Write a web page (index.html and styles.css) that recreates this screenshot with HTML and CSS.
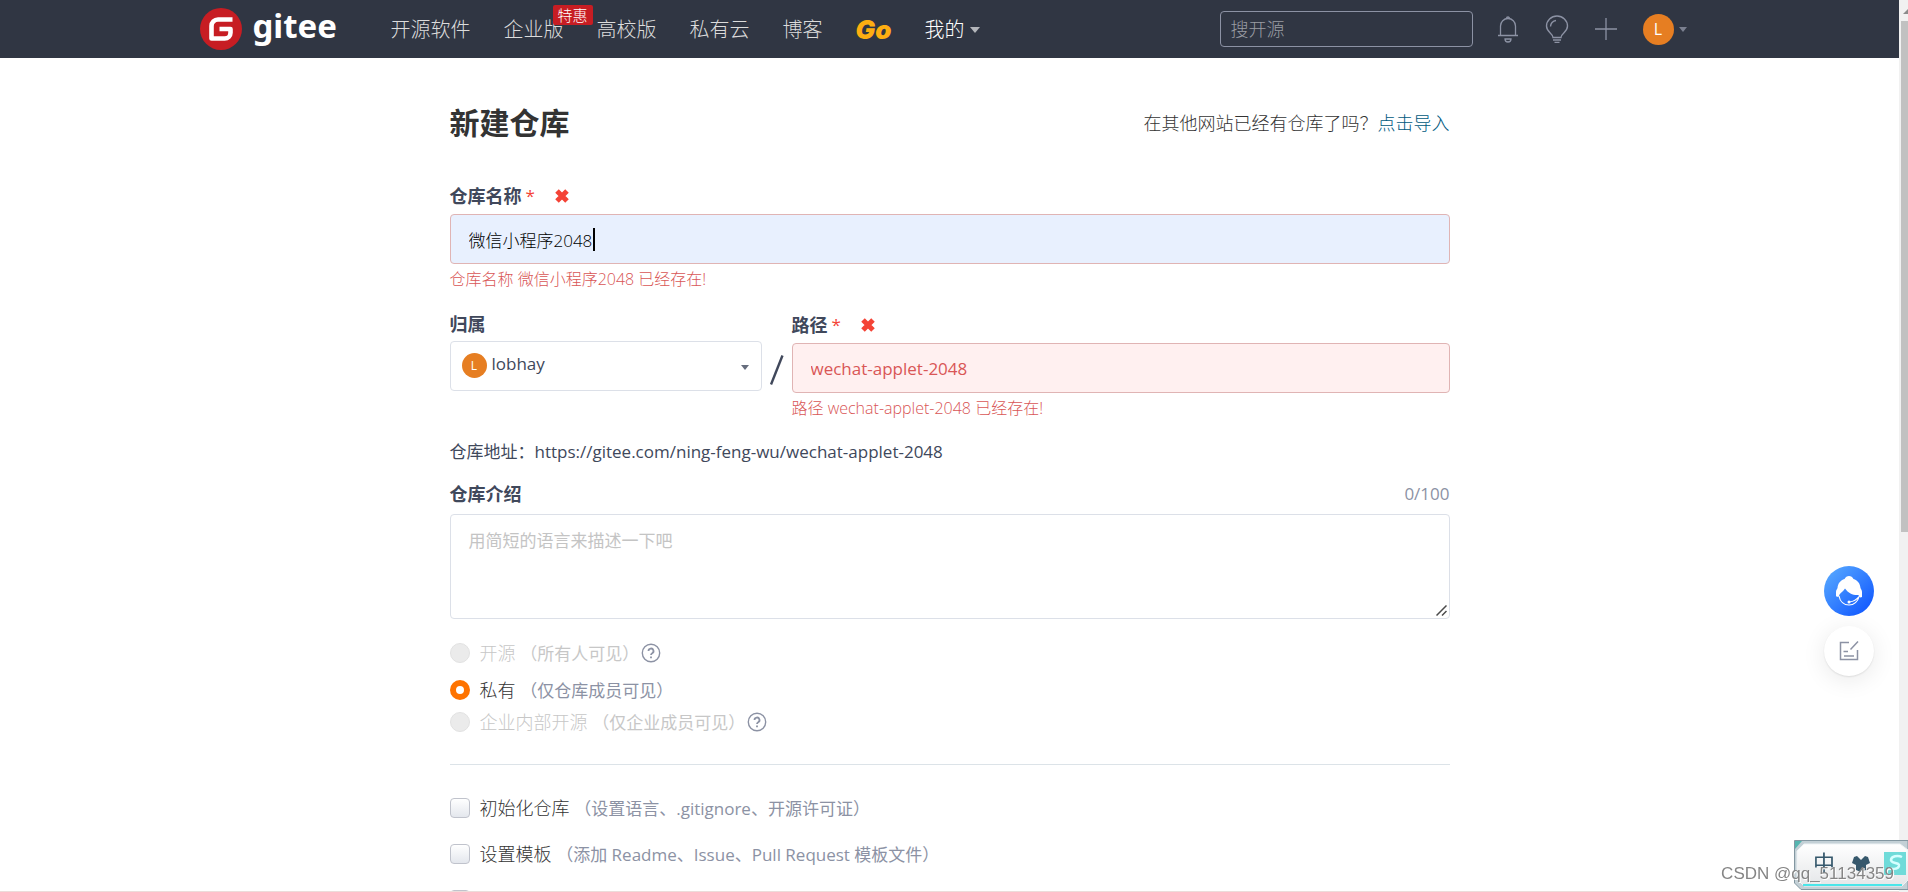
FILE: index.html
```html
<!DOCTYPE html>
<html lang="zh-CN">
<head>
<meta charset="utf-8">
<title>新建仓库 - Gitee</title>
<link rel="stylesheet" href="styles.css">
</head>
<body>
<div class="page">
  <header class="topbar">
    <div class="topbar-inner">
      <a class="logo" href="#">
        <svg class="logo-mark" viewBox="0 0 42 42" aria-hidden="true"><circle cx="21" cy="21" r="21" fill="#c71d23"/><path d="M32.500 11.500H18a6.500 6.500 0 0 0-6.500 6.500v12.500h13.200a5.800 5.800 0 0 0 5.800-5.800V21H19.500" fill="none" stroke="#fff" stroke-width="4.600" stroke-linejoin="round"/></svg>
        <span class="logo-text">gitee</span>
      </a>
      <nav class="nav">
        <a href="#">开源软件</a>
        <a class="has-badge" href="#">企业版<span class="badge">特惠</span></a>
        <a href="#">高校版</a>
        <a href="#">私有云</a>
        <a href="#">博客</a>
        <a class="go" href="#">Go</a>
        <a class="mine" href="#">我的<span class="caret"></span></a>
      </nav>
      <div class="tools">
        <input class="search" type="text" placeholder="搜开源" aria-label="搜开源">
        <button class="tool" type="button" aria-label="通知"><svg width="22" height="28" viewBox="0 0 22 28"><g fill="none" stroke="#8c92a4" stroke-width="1.300"><path d="M1 20.500h20M3.500 20.500V11a7.500 7.500 0 0 1 15 0v9.500"/><path d="M9.500 3.500a1.500 1.500 0 0 1 3 0M8 24h6a3 3 0 0 1-6 0z"/></g></svg></button>
        <button class="tool" type="button" aria-label="提示"><svg width="24" height="28" viewBox="0 0 24 28"><g fill="none" stroke="#8c92a4" stroke-width="1.400"><path d="M8 22.500c0-4.500-6.500-5-6.500-11.500a10.500 10 0 0 1 21 0c0 6.500-6.500 7-6.500 11.500zM8 25h8M9.500 27.500h5M5.500 11.500a6 6 0 0 1 5.500-6"/></g></svg></button>
        <button class="tool" type="button" aria-label="新建"><svg width="22" height="22" viewBox="0 0 22 22"><path d="M0 11h22M11 0v22" stroke="#8c92a4" stroke-width="1.300"/></svg></button>
        <button class="user" type="button" aria-label="账户"><span class="avatar avatar-lg">L</span><span class="caret caret-sm"></span></button>
      </div>
    </div>
  </header>

  <main class="content">
    <div class="heading">
      <h1>新建仓库</h1>
      <p>在其他网站已经有仓库了吗？<a href="#">点击导入</a></p>
    </div>
    <form class="form">
      <div class="field">
        <div class="label-row"><label for="name">仓库名称</label><span class="star">*</span><svg class="cross" viewBox="0 0 14 14"><path d="M2 2l10 10M12 2L2 12" stroke="#f44336" stroke-width="5"/></svg></div>
        <div class="name-wrap">
          <input class="box box-filled" id="name" type="text" value="微信小程序2048">
          <span class="text-cursor"></span>
        </div>
        <p class="error">仓库名称 微信小程序2048 已经存在!</p>
      </div>
      <div class="path-row">
        <div class="owner">
          <div class="label-row"><label for="owner">归属</label></div>
          <div class="select-wrap">
            <span class="avatar avatar-sm">L</span>
            <select class="box" id="owner"><option>lobhay</option></select>
            <span class="caret caret-dark"></span>
          </div>
        </div>
        <svg class="slash" viewBox="0 0 14 30" aria-hidden="true"><path d="M1 29.500L12.500 0.500" stroke="#40485b" stroke-width="2.400"/></svg>
        <div class="field path">
          <div class="label-row"><label for="path">路径</label><span class="star">*</span><svg class="cross" viewBox="0 0 14 14"><path d="M2 2l10 10M12 2L2 12" stroke="#f44336" stroke-width="5"/></svg></div>
          <input class="box box-error" id="path" type="text" value="wechat-applet-2048">
          <p class="error">路径 wechat-applet-2048 已经存在!</p>
        </div>
      </div>
      <p class="address">仓库地址：https://gitee.com/ning-feng-wu/wechat-applet-2048</p>
      <div class="desc-head"><label for="desc">仓库介绍</label><span class="count">0/100</span></div>
      <div class="area-wrap">
        <textarea class="box area" id="desc" placeholder="用简短的语言来描述一下吧"></textarea>
        <svg class="grip" viewBox="0 0 11 11" aria-hidden="true"><path d="M.5 10.500l10-10M6 10.500l4.500-4.500" stroke="#4a4a4a" stroke-width="1.500"/></svg>
      </div>
      <div class="radios">
        <div class="option off"><input type="radio" name="v" id="r1" disabled><label for="r1">开源 <span>（所有人可见）</span></label><svg class="help" viewBox="0 0 20 20"><g fill="none" stroke="#8c92a4"><circle cx="10" cy="10" r="8.700" stroke-width="1.400"/><path d="M7.500 8a2.500 2.500 0 1 1 3.700 2.200c-.9.500-1.200.9-1.200 1.900M10 13.400v1.800" stroke-width="1.800"/></g></svg></div>
        <div class="option"><input type="radio" name="v" id="r2" checked><label for="r2">私有 <span>（仅仓库成员可见）</span></label></div>
        <div class="option off"><input type="radio" name="v" id="r3" disabled><label for="r3">企业内部开源 <span>（仅企业成员可见）</span></label><svg class="help" viewBox="0 0 20 20"><g fill="none" stroke="#8c92a4"><circle cx="10" cy="10" r="8.700" stroke-width="1.400"/><path d="M7.500 8a2.500 2.500 0 1 1 3.700 2.200c-.9.500-1.200.9-1.200 1.900M10 13.400v1.800" stroke-width="1.800"/></g></svg></div>
      </div>
      <div class="checks">
        <div class="option"><input type="checkbox" id="c1"><label for="c1">初始化仓库 <span>（设置语言、.gitignore、开源许可证）</span></label></div>
        <div class="option"><input type="checkbox" id="c2"><label for="c2">设置模板 <span>（添加 Readme、Issue、Pull Request 模板文件）</span></label></div>
        <div class="option"><input type="checkbox" aria-label="分支模型"></div>
      </div>
    </form>
  </main>
</div>

<div class="scrollbar"><svg class="scroll-up" viewBox="0 0 9 21"><path d="M4 14l5-5v5z" fill="#8b8b8b"/></svg><div class="thumb"></div></div>

<div class="floats">
  <button class="float service" type="button" aria-label="客服"><svg width="50" height="50" viewBox="0 0 50 50"><path fill="#fff" d="M12 30V26c0-2 1-2.500 1.500-4 .5-5 3-7.500 7-9 1-2 2.500-3 4.500-3s3.500 1 4.500 3c4 1.500 6.500 4 7 9 .5 1.500 1.500 2 1.500 4v5c-1.500 1-3 .5-3.500-2-5 .5-10-1.500-13.500-6.500-1.500 3-4 3.500-5.500 6-.5 2.500-2 3-3.500 1.500z"/><path d="M15 30c1 5.500 5 9 10 9s9-3.500 10-8.500c-2.500 3.500-5.500 5-9.500 5.500" fill="none" stroke="#fff" stroke-width="1.200"/><circle cx="25" cy="36" r="1.500" fill="#fff"/></svg></button>
  <button class="float note" type="button" aria-label="反馈"><svg width="20" height="20" viewBox="0 0 20 20"><path d="M10 1.500H1.500v17h17V9M19 .5l-7.500 8M4.500 10.500H9M5 15h10" fill="none" stroke="#8c92a4" stroke-width="1.500"/></svg></button>
</div>

<div class="ime">
  <svg viewBox="0 0 114 50" width="114" height="50">
    <defs><linearGradient id="g" x2="0" y2="1"><stop offset="0" stop-color="#fff"/><stop offset="1" stop-color="#e4e6e8"/></linearGradient></defs>
    <path d="M.5.5H114v49H7L.5 43z" fill="#c3d0d6" stroke="#8397a1"/>
    <path d="M1 1h7L1 9z" fill="#55b5b0"/>
    <path d="M10 4h96l8 6v30l-6 6H10l-7-7V11z" fill="url(#g)" stroke="#eef3f5"/>
    <path d="M9 45h99" stroke="#16e5e8" stroke-width="1.500"/>
    <path d="M60 17l3-1 4 4 4-4 3 1 2 6-4 2v5l-5 2-5-2v-5l-4-2z" fill="#36586c"/>
    <rect x="90" y="12" width="22" height="23" fill="#6fdbd9"/><path d="M108 17c-4-2-11-1-11 3s9 2 8 6-8 3-11 2" fill="none" stroke="#d5ffff" stroke-width="2.500"/>
  </svg>
  <span class="ime-mode">中</span>
</div>
<div class="watermark">CSDN @qq_51134359</div>
</body>
</html>
```
FILE: styles.css
```css
* { box-sizing: border-box; }

body {
  margin: 0;
  height: 100vh;
  display: flex;
  overflow: hidden;
  background: #fff;
  color: #40485b;
  font-family: "Open Sans", "Noto Sans CJK SC", sans-serif;
  font-size: 17px;
  font-weight: 400;
  line-height: 26px;
}

h1, p { margin: 0; }
a { text-decoration: none; }
input, select, textarea, button { font: inherit; color: inherit; }
button { border: 0; padding: 0; background: none; display: flex; align-items: center; }
svg { display: block; flex: none; }

.page { flex: 1; min-width: 0; overflow: hidden; border-bottom: 1px solid #ecdcda; }

.topbar { background: #303643; }
.topbar-inner {
  max-width: 1500px;
  height: 58px;
  margin: 0 auto;
  display: flex;
  align-items: center;
}
.logo { display: flex; align-items: center; gap: 11px; width: 191px; color: #fff; }
.logo-mark { width: 42px; height: 42px; }
.logo-text { font-family: "Noto Sans", sans-serif; font-weight: 700; font-size: 33px; line-height: 40px; padding-bottom: 6px; }
.nav { display: flex; align-items: center; gap: 33px; padding-top: 2px; font-size: 20px; font-weight: 300; }
.nav a { color: #dcdcdc; white-space: nowrap; }
.has-badge { position: relative; }
.badge {
  position: absolute;
  left: 49px;
  top: -12px;
  width: 40px;
  height: 20px;
  border-radius: 2px;
  background: #c71d23;
  color: #fff;
  font-size: 15px;
  line-height: 20px;
  text-align: center;
}
.nav .go { color: #feae11; font-family: Inter, sans-serif; font-weight: 900; font-style: italic; font-size: 26px; }
.nav .mine { color: #fff; display: flex; align-items: center; gap: 6px; }
.caret { border: 5px solid transparent; border-top: 6px solid #b4b6bb; border-bottom: 0; }
.caret-sm { border-width: 5px 4px 0; border-top-color: #7b8090; }
.caret-dark { border-width: 5px 4px 0; border-top-color: #666d7d; }

.tools { display: flex; align-items: center; margin-left: auto; gap: 26px; padding-right: 13px; }
.search {
  width: 253px;
  height: 36px;
  margin-right: -2px;
  padding: 0 10px;
  border: 1px solid #8c92a4;
  border-radius: 4px;
  background: transparent;
  color: #fff;
  font-size: 18px;
  font-weight: 300;
}
.search::placeholder { color: #9a9da3; }
.user { gap: 5px; }
.avatar {
  display: flex;
  align-items: center;
  justify-content: center;
  border-radius: 50%;
  background: #e67e22;
  color: #fff;
}
.avatar-lg { width: 31px; height: 31px; font-size: 16px; }
.avatar-sm { width: 25px; height: 25px; font-size: 12px; }

.content { max-width: 1000px; margin: 0 auto; padding-top: 44px; }
.heading { display: flex; align-items: center; justify-content: space-between; color: #333; height: 42px; }
.heading p { font-size: 18px; font-weight: 300; }
h1 { font-size: 30px; font-weight: 700; }
.heading a { color: #005980; }

.form { padding-top: 39px; }
.label-row { display: flex; align-items: center; height: 26px; margin-bottom: 5px; }
.label-row label, .desc-head label { font-size: 18px; font-weight: 700; }
.star { color: #f44336; margin-left: 4px; }
.cross { width: 14px; height: 14px; margin-left: 20px; }

.box {
  display: block;
  width: 100%;
  height: 50px;
  padding: 0 18px;
  border: 1px solid #dce0e8;
  border-radius: 4px;
  background: #fff;
  outline: none;
}
.box-filled { background: #e8f0fe; border-color: #e0b4b4; color: #000; font-weight: 300; }
.box-error { background: #fff0f0; border-color: #e0b4b4; color: #d95656; }
.name-wrap { position: relative; }
.text-cursor { position: absolute; left: 143px; top: 14px; width: 2px; height: 23px; background: #000; }
.error { color: #d95656; font-size: 16px; font-weight: 300; line-height: 24px; padding-top: 3px; }

.path-row { display: flex; align-items: flex-start; gap: 8px; padding-top: 20px; }
.owner { width: 312px; }
.owner .label-row { margin-bottom: 4px; }
.slash { width: 14px; height: 30px; margin-top: 44px; }
.path { flex: 1; padding-top: 1px; }
.select-wrap { position: relative; }
.select-wrap .box { appearance: none; padding: 0 32px 4px 41px; }
.select-wrap .avatar { position: absolute; left: 12px; top: 12px; }
.select-wrap .caret { position: absolute; right: 13px; top: 24px; }

.address { padding-top: 19px; }
.desc-head { display: flex; justify-content: space-between; padding: 16px 0 7px; }
.count { color: #8c92a4; }
.area-wrap { position: relative; }
.area { height: 105px; padding: 13px 18px; resize: none; }
.area::placeholder { color: #c4c4c4; }
.grip { position: absolute; right: 3px; bottom: 3px; width: 11px; height: 11px; }

.radios { display: grid; gap: 6px; padding: 21px 0 29px; border-bottom: 1px solid #dce3e8; }
.radios .option:first-child { margin-bottom: 5px; }
.checks { display: grid; gap: 20px; padding-top: 30px; }
.option { display: flex; align-items: center; height: 26px; color: #333; white-space: nowrap; }
.option label { font-size: 18px; font-weight: 300; }
.option span { color: #8c92a4; font-size: 17px; font-weight: 400; }
.option input {
  appearance: none;
  flex: none;
  width: 20px;
  height: 20px;
  margin: 0 10px 0 0;
  border: 1px solid #c0c3cc;
  border-radius: 4px;
  background: linear-gradient(#fff, #e4e7ed);
}
.option input[type="radio"] { border-radius: 50%; border-color: #e2e2e2; background: #ebebeb; }
.option input[type="radio"]:checked { border: 6px solid #fe7300; background: #fff; }
.off, .off span { color: #c7c7c7; }
.help { width: 20px; height: 20px; margin-left: 2px; }

.scrollbar { width: 9px; background: #f1f1f1; }
.scroll-up { width: 9px; height: 21px; }
.thumb { height: 511px; margin-left: 2px; background: #c1c1c1; }

.floats { position: fixed; right: 34px; bottom: 216px; display: grid; gap: 10px; }
.float { width: 50px; height: 50px; border-radius: 50%; justify-content: center; }
.service { background: linear-gradient(135deg, #5caeff, #0a50ff); }
.note { background: #fff; box-shadow: 0 1px 2px rgba(0, 0, 0, 0.1), 0 4px 24px rgba(0, 0, 0, 0.09); }

.ime { position: fixed; right: 0; bottom: 2px; }
.ime-mode { position: absolute; left: 19px; top: 9px; font-size: 22px; color: #36586c; }
.watermark {
  position: fixed;
  right: 14px;
  bottom: 5px;
  font-family: "Liberation Sans", sans-serif;
  font-size: 17px;
  color: #858585;
  text-shadow: 1px 1px 0 #fff;
}
```
